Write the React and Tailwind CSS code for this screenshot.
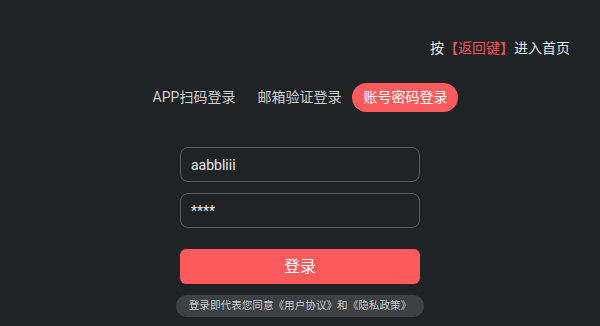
import React, { useState } from "react";

const tabs = ["APP扫码登录", "邮箱验证登录", "账号密码登录"];

export default function App() {
  const [active, setActive] = useState(2);
  const [user, setUser] = useState("aabbliii");
  const [pwd, setPwd] = useState("****");

  return (
    <div
      className="h-[326px] w-full bg-[#202326] flex flex-col overflow-hidden"
      style={{ fontFamily: 'Roboto, "Noto Sans CJK SC", sans-serif' }}
    >
      <div className="flex justify-end pr-[30px] pt-[38px] text-[14px] leading-[20px] text-[#e6e6e6]">
        按<span className="text-[#f25256]">【返回键】</span>进入首页
      </div>

      <div className="flex justify-center items-center mt-[25px]">
        {tabs.map((t, i) => (
          <button
            key={t}
            onClick={() => setActive(i)}
            className={`h-[29px] px-[11px] rounded-full text-[14px] leading-[29px] ${
              i === active ? "bg-[#fd5a5e] text-white" : "text-[#cfcfcf]"
            }`}
          >
            {t}
          </button>
        ))}
      </div>

      <div className="flex flex-col items-center mt-[35px]">
        <input
          value={user}
          onChange={(e) => setUser(e.target.value)}
          className="w-[240px] h-[35px] rounded-[8px] border border-[#595b5e] bg-transparent px-[10px] text-[14px] text-[#e8e8e8] outline-none"
        />
        <input
          value={pwd}
          onChange={(e) => setPwd(e.target.value)}
          className="w-[240px] h-[35px] mt-[11px] rounded-[8px] border border-[#595b5e] bg-transparent px-[10px] text-[14px] text-[#e8e8e8] outline-none"
        />
        <button className="w-[240px] h-[35px] mt-[21px] rounded-[6px] bg-[#fd5a5e] text-white text-[16px]">
          登录
        </button>
        <div className="mt-[11px] h-[22px] px-[13px] rounded-full bg-[#3e4144] text-[#c9c9c9] text-[10.6px] leading-[22px]">
          登录即代表您同意《用户协议》和《隐私政策》
        </div>
      </div>
    </div>
  );
}
